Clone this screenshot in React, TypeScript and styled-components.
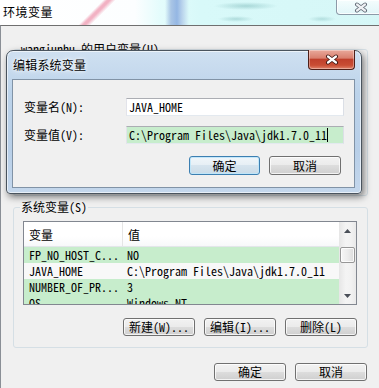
import React from "react";
import styled, { createGlobalStyle } from "styled-components";

const SONG = `"Noto Sans Mono CJK SC", "Liberation Mono", "Noto Sans CJK SC", monospace`;
const YAHEI = `"Noto Sans CJK SC", "Noto Sans", sans-serif`;
const GREEN = "#c7edcc";

const GlobalStyle = createGlobalStyle`
  html, body {
    margin: 0;
    padding: 0;
    background: #f0f0f0;
  }
  body {
    width: 379px;
    height: 388px;
    overflow: hidden;
  }
`;

const Screen = styled.div`
  position: relative;
  width: 379px;
  height: 388px;
  overflow: hidden;
  font-family: ${SONG};
  font-size: 12px;
  color: #000;
`;

const Window = styled.div`
  width: 390px;
  height: 388px;
  display: flex;
  flex-direction: column;
  background: linear-gradient(#e4ecf4, #d6e1ec 80%, #a9c4e2 92%, #dbe5ef);
`;

const TitleBar = styled.div`
  height: 25px;
  flex: none;
  display: flex;
  align-items: flex-start;
  padding-left: 3px;
  background:
    radial-gradient(ellipse 32px 4px at 246px 6px, rgba(110, 175, 175, 0.45), transparent),
    radial-gradient(ellipse 18px 3px at 236px 19px, rgba(110, 175, 175, 0.4), transparent),
    radial-gradient(ellipse 14px 3px at 322px 19px, rgba(110, 175, 175, 0.35), transparent),
    linear-gradient(90deg, transparent 165px, rgba(160, 188, 225, 0.85) 171px, rgba(140, 175, 225, 0.9) 177px, rgba(175, 200, 232, 0.8) 182px, transparent 189px),
    linear-gradient(135deg, transparent 73px, rgba(240, 165, 185, 0.85) 76px, rgba(240, 165, 185, 0.85) 78px, transparent 82px),
    linear-gradient(90deg, #ffffff 0, #fcfeff 135px, #e4fcfc 160px, #d8f9f9 200px, #d6f7f7 100%);
`;

const TitleText = styled.div`
  font-family: ${YAHEI};
  font-size: 12px;
  line-height: 16px;
  padding-top: 4px;
  letter-spacing: 0.5px;
  text-shadow: 0 0 6px #fff, 0 0 3px #fff;
`;

const CloseButton = styled.div<{ $active?: boolean }>`
  margin-left: auto;
  flex: none;
  box-sizing: border-box;
  display: flex;
  align-items: center;
  justify-content: center;
  border: 1px solid ${(p) => (p.$active ? "#4e1f18" : "#8c9aa8")};
  border-top: none;
  border-radius: 0 0 4px 4px;
  background: ${(p) =>
    p.$active
      ? "linear-gradient(#e9a99b, #d9806f 42%, #c0402c 50%, #c94d34 80%, #e0826a)"
      : "linear-gradient(rgba(255,255,255,0.75), rgba(235,245,250,0.55))"};
  box-shadow: inset 0 0 0 1px rgba(255, 255, 255, ${(p) => (p.$active ? 0.35 : 0.8)});
`;

const OuterClose = styled(CloseButton)`
  width: 50px;
  height: 15px;
  margin-right: 4px;
`;

const Client = styled.div`
  flex: 1;
  display: flex;
  flex-direction: column;
  align-items: flex-start;
  padding-left: 12px;
  background: #f0f0f0;
  border-top: 1px solid #6f6f6f;
  border-left: 1px solid #8a8f96;
`;

const Group = styled.fieldset<{ $height?: number }>`
  box-sizing: border-box;
  width: 355px;
  ${(p) => (p.$height ? `height: ${p.$height}px;` : "")}
  margin: 0;
  padding: 7px 10px 11px 9px;
  border: 1px solid #d5dfe5;
  border-radius: 3px;
  min-inline-size: 0;
`;

const Legend = styled.legend`
  margin-left: -3px;
  padding: 0 1px;
  line-height: 14px;
`;

const UserGroup = styled(Group)`
  margin-top: 16px;
`;

const SystemGroup = styled(Group)`
  margin-top: 4px;
`;

const ListView = styled.div`
  box-sizing: border-box;
  width: 334px;
  height: 84px;
  border: 1px solid #828790;
  display: flex;
  background: ${GREEN};
`;

const Table = styled.div`
  flex: 1;
  overflow: hidden;
`;

const HeaderRow = styled.div`
  display: grid;
  grid-template-columns: 98px 1fr;
  height: 25px;
  box-sizing: border-box;
  background: linear-gradient(#ffffff, #ffffff 60%, #f7f8fa);
  border-bottom: 1px solid #e3e6ea;
`;

const HeaderCell = styled.div<{ $divider?: boolean }>`
  display: flex;
  align-items: center;
  padding-left: 5px;
  padding-top: 1px;
  ${(p) => (p.$divider ? "border-left: 1px solid #e5e5e5;" : "")}
`;

const Row = styled.div<{ $selected?: boolean }>`
  display: grid;
  grid-template-columns: 98px 1fr;
  height: 16px;
  line-height: 16px;
  background: ${(p) => (p.$selected ? "#f8f8f8" : "transparent")};
  white-space: nowrap;
`;

const Cell = styled.div`
  padding-left: 5px;
  overflow: hidden;
`;

const ScrollBar = styled.div`
  width: 17px;
  flex: none;
  display: flex;
  flex-direction: column;
  background: linear-gradient(90deg, #e6e6e6, #f4f4f4 40%, #f2f2f2 70%, #e9e9e9);
`;

const ArrowButton = styled.div`
  height: 17px;
  flex: none;
  display: flex;
  align-items: center;
  justify-content: center;
`;

const Track = styled.div`
  flex: 1;
  padding-top: 8px;
`;

const Thumb = styled.div`
  box-sizing: border-box;
  width: 15px;
  height: 16px;
  margin-left: 1px;
  border: 1px solid #979797;
  border-radius: 2px;
  background: linear-gradient(90deg, #f6f6f6, #ececec 50%, #dcdcdc);
  box-shadow: inset 0 0 0 1px rgba(255, 255, 255, 0.8);
`;

const ButtonRow = styled.div<{ $top: number; $right?: number }>`
  display: flex;
  justify-content: flex-end;
  gap: 9px;
  margin-top: ${(p) => p.$top}px;
  padding-right: ${(p) => p.$right ?? 0}px;
  width: 100%;
  box-sizing: border-box;
`;

const Footer = styled(ButtonRow)`
  width: 355px;
`;

const Button = styled.button<{ $default?: boolean; $height?: number; $width?: number }>`
  box-sizing: border-box;
  width: ${(p) => p.$width ?? 72}px;
  height: ${(p) => p.$height ?? 18}px;
  margin: 0;
  padding: 0;
  border: 1px solid ${(p) => (p.$default ? "#3c7fb1" : "#707070")};
  border-radius: 3px;
  background: ${(p) =>
    p.$default
      ? "linear-gradient(#f0f6fa, #e6eff5 48%, #d6e4ee 50%, #cadbe7)"
      : "linear-gradient(#f2f2f2, #ebebeb 48%, #dddddd 50%, #cfcfcf)"};
  box-shadow: inset 0 0 0 1px ${(p) => (p.$default ? "rgba(190,230,250,0.9)" : "rgba(255,255,255,0.75)")};
  font-family: ${SONG};
  font-size: 12px;
  line-height: 16px;
  color: #000;
`;

const Dialog = styled.div`
  position: absolute;
  left: 6px;
  top: 50px;
  width: 356px;
  height: 144px;
  box-sizing: border-box;
  display: flex;
  flex-direction: column;
  padding: 0 6px 5px 5px;
  border: 1px solid #4a545e;
  border-radius: 7px 7px 4px 4px;
  background: linear-gradient(#cfe0f1, #bcd3ea 30%, #b8cfe8 70%, #c4d7ec);
  box-shadow: inset 0 0 0 1px rgba(255, 255, 255, 0.6), 2px 3px 7px rgba(0, 0, 0, 0.5);
`;

const DialogTitle = styled.div`
  height: 28px;
  flex: none;
  display: flex;
  align-items: flex-start;
`;

const DialogTitleText = styled(TitleText)`
  padding-top: 6px;
  padding-left: 1px;
  letter-spacing: 0.2px;
`;

const DialogClose = styled(CloseButton)`
  width: 47px;
  height: 20px;
  margin-top: -1px;
  margin-right: 0;
`;

const DialogClient = styled.div`
  flex: 1;
  box-sizing: border-box;
  padding: 18px 12px 0 11px;
  background: #f0f0f0;
  border: 1px solid #8193a6;
`;

const Form = styled.div`
  display: grid;
  grid-template-columns: 102px 218px;
  row-gap: 10px;
  align-items: center;
`;

const Label = styled.div`
  line-height: 16px;
`;

const TextBox = styled.div<{ $fill?: string }>`
  box-sizing: border-box;
  height: 18px;
  padding: 0 2px;
  border: 1px solid;
  border-color: #abadb3 #dbdfe6 #e3e9ef #e2e3ea;
  background: ${(p) => p.$fill ?? "#fff"};
  line-height: 16px;
  white-space: nowrap;
  overflow: hidden;
  display: flex;
  align-items: center;
`;

const Caret = styled.span`
  flex: none;
  width: 1px;
  height: 14px;
  background: #000;
`;

const CloseGlyph = ({ dim }: { dim?: boolean }) => (
  <svg width="14" height="11" viewBox="0 0 14 11">
    <path d="M3 2.5 L11 8.5 M11 2.5 L3 8.5" stroke={dim ? "#5b6470" : "#3a1410"} strokeWidth="4" strokeLinecap="round" />
    <path d="M3 2.5 L11 8.5 M11 2.5 L3 8.5" stroke={dim ? "#eef1f4" : "#ffffff"} strokeWidth="2.2" strokeLinecap="round" />
  </svg>
);

const Arrow = ({ up }: { up?: boolean }) => (
  <svg width="7" height="4" viewBox="0 0 7 4">
    <polygon points={up ? "0,4 7,4 3.5,0" : "0,0 7,0 3.5,4"} fill="#4a4f58" />
  </svg>
);

const JAVA_PATH = "C:\\Program Files\\Java\\jdk1.7.0_11";

const rows = [
  { name: "FP_NO_HOST_C...", value: "NO" },
  { name: "JAVA_HOME", value: JAVA_PATH, selected: true },
  { name: "NUMBER_OF_PR...", value: "3" },
  { name: "OS", value: "Windows_NT" },
];

const App = () => (
  <>
    <GlobalStyle />
    <Screen>
      <Window>
        <TitleBar>
          <TitleText>环境变量</TitleText>
          <OuterClose>
            <CloseGlyph dim />
          </OuterClose>
        </TitleBar>
        <Client>
          <UserGroup $height={154}>
            <Legend>wangjunhu 的用户变量(U)</Legend>
          </UserGroup>
          <SystemGroup>
            <Legend>系统变量(S)</Legend>
            <ListView>
              <Table>
                <HeaderRow>
                  <HeaderCell>变量</HeaderCell>
                  <HeaderCell $divider>值</HeaderCell>
                </HeaderRow>
                {rows.map((r) => (
                  <Row key={r.name} $selected={r.selected}>
                    <Cell>{r.name}</Cell>
                    <Cell>{r.value}</Cell>
                  </Row>
                ))}
              </Table>
              <ScrollBar>
                <ArrowButton>
                  <Arrow up />
                </ArrowButton>
                <Track>
                  <Thumb />
                </Track>
                <ArrowButton>
                  <Arrow />
                </ArrowButton>
              </ScrollBar>
            </ListView>
            <ButtonRow $top={13}>
              <Button>新建(W)...</Button>
              <Button>编辑(I)...</Button>
              <Button>删除(L)</Button>
            </ButtonRow>
          </SystemGroup>
          <Footer $top={15} $right={1}>
            <Button>确定</Button>
            <Button>取消</Button>
          </Footer>
        </Client>
      </Window>

      <Dialog>
        <DialogTitle>
          <DialogTitleText>编辑系统变量</DialogTitleText>
          <DialogClose $active>
            <CloseGlyph />
          </DialogClose>
        </DialogTitle>
        <DialogClient>
          <Form>
            <Label>变量名(N):</Label>
            <TextBox>JAVA_HOME</TextBox>
            <Label>变量值(V):</Label>
            <TextBox $fill={GREEN}>
              <span>{JAVA_PATH}</span>
              <Caret />
            </TextBox>
          </Form>
          <ButtonRow $top={12} $right={1}>
            <Button $default $height={19} $width={71}>确定</Button>
            <Button $height={19}>取消</Button>
          </ButtonRow>
        </DialogClient>
      </Dialog>
    </Screen>
  </>
);

export default App;
